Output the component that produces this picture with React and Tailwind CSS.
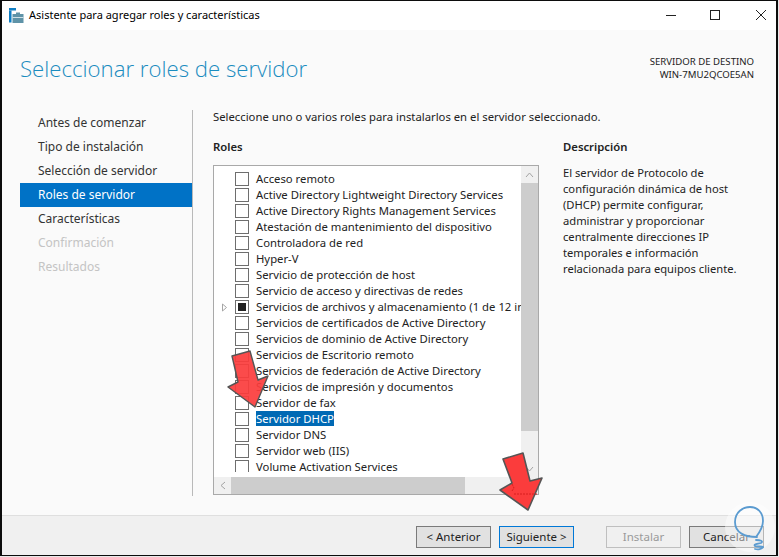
import React from "react";

const steps = [
  { t: "Antes de comenzar" },
  { t: "Tipo de instalación" },
  { t: "Selección de servidor" },
  { t: "Roles de servidor", active: true },
  { t: "Características" },
  { t: "Confirmación", disabled: true },
  { t: "Resultados", disabled: true },
];

const roles = [
  "Acceso remoto",
  "Active Directory Lightweight Directory Services",
  "Active Directory Rights Management Services",
  "Atestación de mantenimiento del dispositivo",
  "Controladora de red",
  "Hyper-V",
  "Servicio de protección de host",
  "Servicio de acceso y directivas de redes",
  "Servicios de archivos y almacenamiento (1 de 12 instalados)",
  "Servicios de certificados de Active Directory",
  "Servicios de dominio de Active Directory",
  "Servicios de Escritorio remoto",
  "Servicios de federación de Active Directory",
  "Servicios de impresión y documentos",
  "Servidor de fax",
  "Servidor DHCP",
  "Servidor DNS",
  "Servidor web (IIS)",
  "Volume Activation Services",
];

function Btn({ children, cls = "" }) {
  return (
    <div className={`w-[75px] h-[22px] flex items-center justify-center border text-[11.5px] ${cls}`}>
      {children}
    </div>
  );
}

export default function App() {
  return (
    <div className="relative w-[779px] h-[557px] bg-[#e8e8e8] overflow-hidden text-[#1a1a1a] text-[12px]" style={{ fontFamily: '"Noto Sans", "Liberation Sans", sans-serif' }}>
      <div className="w-[778px] h-[556px] border-y border-l-2 border-r-2 border-[#0c0c0c] flex flex-col bg-[#fafafa]">
        {/* title bar */}
        <div className="h-[29px] bg-white flex items-center shrink-0">
          <svg className="ml-[6px]" width="16" height="16" viewBox="0 0 16 16">
            <rect x="1" y="0" width="7" height="2.5" fill="#0f7ec4" />
            <rect x="1" y="2.5" width="2.5" height="12" fill="#0f7ec4" />
            <rect x="4.5" y="6" width="11" height="9" fill="#5f93a8" />
            <rect x="4.5" y="9" width="11" height="1" fill="#cfe0e6" />
            <rect x="8" y="4.5" width="4" height="1.5" fill="#5f93a8" />
          </svg>
          <span className="ml-[5px] mb-[2px] text-[11px] leading-none text-black">Asistente para agregar roles y características</span>
          <div className="ml-auto flex items-center text-black pb-[2px]">
            <svg width="12" height="12" viewBox="0 0 12 12" className="mr-[32px]"><path d="M1 6.5h10" stroke="#222" strokeWidth="1" /></svg>
            <svg width="12" height="12" viewBox="0 0 12 12" className="mr-[34px]"><rect x="1.5" y="1.5" width="9" height="9" fill="none" stroke="#222" strokeWidth="1" /></svg>
            <svg width="12" height="12" viewBox="0 0 12 12" className="mr-[9px]"><path d="M1 1l10 10M11 1L1 11" stroke="#222" strokeWidth="1" /></svg>
          </div>
        </div>

        {/* header */}
        <div className="h-[78px] flex shrink-0 justify-between pl-[18px] pr-[22px]">
          <h1 className="mt-[24px] text-[22.2px] leading-[30px] font-light text-[#1b8cbf]" style={{ fontFamily: '"Open Sans", sans-serif' }}>Seleccionar roles de servidor</h1>
          <div className="mt-[25px] text-right text-[9.6px] leading-[13px] text-[#222]">
            <div>SERVIDOR DE DESTINO</div>
            <div>WIN-7MU2QCOE5AN</div>
          </div>
        </div>

        {/* body */}
        <div className="flex-1 flex min-h-0">
          {/* sidebar */}
          <div className="w-[172px] ml-[18px] pt-[3px] shrink-0">
            {steps.map((s) => (
              <div
                key={s.t}
                className={`h-[24px] pl-[18px] flex items-center text-[12px] ${s.active ? "bg-[#0072c6] text-white" : s.disabled ? "text-[#c4c4c4]" : "text-[#333]"}`}
              >
                {s.t}
              </div>
            ))}
          </div>
          <div className="w-px h-[386px] mt-[2px] bg-[#b9b9b9] shrink-0" />
          {/* content */}
          <div className="ml-[20px] flex-1 min-w-0">
            <div className="text-[11.3px] leading-[16px] pt-[1px] text-[#222]">Seleccione uno o varios roles para instalarlos en el servidor seleccionado.</div>
            <div className="flex mt-[14px]">
              <div className="w-[325px] shrink-0">
                <div className="font-semibold text-[11.3px] leading-[16px] text-[#222]">Roles</div>
                <div className="mt-[10px] w-[326px] h-[330px] border border-[#a9a9a9] bg-white flex flex-col">
                  <div className="flex-1 flex min-h-0">
                    <div className="flex-1 min-w-0 self-start h-[306px] overflow-hidden pt-[5px]">
                      {roles.map((r, i) => (
                        <div key={r} className="h-[16px] flex items-center">
                          <div className="w-[21px] shrink-0 flex justify-center">
                            {i === 8 && (
                              <svg width="7" height="9" viewBox="0 0 7 9"><path d="M1.5 1l4 3.5-4 3.5z" fill="none" stroke="#a6a6a6" /></svg>
                            )}
                          </div>
                          <div className="w-[14px] h-[14px] border border-[#6e6e6e] bg-white shrink-0 flex items-center justify-center">
                            {i === 8 && <div className="w-[8px] h-[8px] bg-[#222]" />}
                          </div>
                          <span className={`ml-[7px] mb-[2px] whitespace-nowrap text-[11.3px] leading-[15px] ${i === 15 ? "bg-[#0069b4] text-white" : "text-[#222]"}`}>{r}</span>
                        </div>
                      ))}
                    </div>
                    {/* vertical scrollbar */}
                    <div className="w-[17px] bg-[#f0f0f0] flex flex-col shrink-0">
                      <div className="h-[17px] flex items-center justify-center">
                        <svg width="9" height="6" viewBox="0 0 9 6"><path d="M1 5l3.5-4L8 5" fill="none" stroke="#a3a3a3" /></svg>
                      </div>
                      <div className="h-[248px] bg-[#cdcdcd]" />
                      <div className="flex-1 flex items-end justify-center pb-[5px]">
                        <svg width="9" height="6" viewBox="0 0 9 6"><path d="M1 1l3.5 4L8 1" fill="none" stroke="#a3a3a3" /></svg>
                      </div>
                    </div>
                  </div>
                  {/* horizontal scrollbar */}
                  <div className="h-[17px] bg-[#f0f0f0] flex shrink-0">
                    <div className="w-[17px] flex items-center justify-center">
                      <svg width="6" height="9" viewBox="0 0 6 9"><path d="M5 1L1 4.5 5 8" fill="none" stroke="#a3a3a3" /></svg>
                    </div>
                    <div className="w-[234px] bg-[#cdcdcd]" />
                  </div>
                </div>
              </div>
              <div className="ml-[25px] w-[190px]">
                <div className="font-semibold text-[11.3px] leading-[16px] text-[#222]">Descripción</div>
                <div className="mt-[10px] text-[11.2px] leading-[16px] text-[#222]">
                  El servidor de Protocolo de<br />configuración dinámica de host<br />(DHCP) permite configurar,<br />administrar y proporcionar<br />centralmente direcciones IP<br />temporales e información<br />relacionada para equipos cliente.
                </div>
              </div>
            </div>
          </div>
        </div>

        {/* footer */}
        <div className="h-[40px] shrink-0 bg-[#f0f0f0] border-t border-[#dfdfdf] flex items-center justify-end pr-[12px] pt-[3px]">
          <Btn cls="bg-[#e1e1e1] border-[#7a7a7a] text-[#222]">&lt; Anterior</Btn>
          <Btn cls="ml-[8px] bg-[#e1e1e1] border-[#0078d7] text-[#222]">Siguiente &gt;</Btn>
          <Btn cls="ml-[32px] bg-[#f0f0f0] border-[#bfbfbf] text-[#9a9a9a]">Instalar</Btn>
          <Btn cls="ml-[8px] bg-[#e1e1e1] border-[#7a7a7a] text-[#222]">Cancelar</Btn>
        </div>
      </div>

      {/* overlays */}
      <svg className="absolute left-[225px] top-[349px]" width="46" height="60" viewBox="225 349 46 60">
        <polygon points="232,356 250,351 258,380 268,376 255,407 228,387 238,382" fill="#fb3c3c" fillOpacity="0.92" stroke="#555" strokeWidth="1.4" strokeLinejoin="round" />
      </svg>
      <svg className="absolute left-[497px] top-[450px]" width="48" height="62" viewBox="497 450 48 62">
        <polygon points="503,459 523,453 530,481 542,478 528,510 500,490 512,483" fill="#fb3c3c" stroke="#555" strokeWidth="1.6" strokeLinejoin="round" />
        <path d="M512 484l2 4-2 3M514 494h24" fill="none" stroke="#d81e1e" strokeWidth="1" strokeDasharray="2 1" />
      </svg>
      <svg className="absolute left-[724px] top-[500px]" width="52" height="52" viewBox="0 0 52 52">
        <circle cx="26" cy="27" r="25" fill="#fff" fillOpacity="0.45" />
        <path d="M33 37C21 37 11 33 11 22C11 12 19 7 26 7C34 7 39 13 39 21C39 28 35 33 32 37M32 40C36 40 40 41 37 43C34 44 29 44 31 46C33 47 38 46 39 47C38 49 34 50 31 49" fill="none" stroke="#5b9bd0" strokeWidth="1.8" strokeLinecap="round" />
      </svg>
    </div>
  );
}
